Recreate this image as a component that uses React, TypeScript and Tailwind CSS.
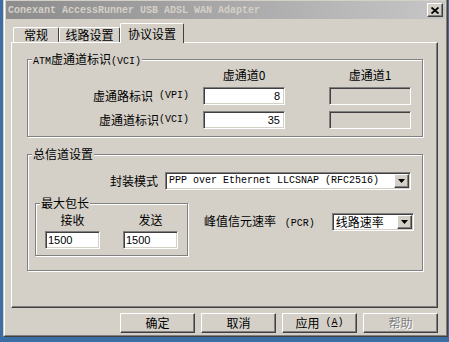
import type { ReactNode } from 'react'

const raised =
  'border border-t-white border-l-white border-r-[#404040] border-b-[#404040] shadow-[inset_-1px_-1px_0_#808080]'
const sunken =
  'border border-t-[#808080] border-l-[#808080] border-r-white border-b-white shadow-[inset_1px_1px_0_#404040,inset_-1px_-1px_0_#d4d0c8]'
const mono = "font-['Liberation_Mono',monospace] text-[10px]"
const sans = "font-['Liberation_Sans',sans-serif] text-[11px]"

function Latin({ children }: { children: ReactNode }) {
  return <span className={mono}>{children}</span>
}

function GroupBox({ label, className, children }: { label: ReactNode; className: string; children: ReactNode }) {
  return (
    <div className={`relative border border-[#808080] shadow-[1px_1px_0_#fff,inset_1px_1px_0_#fff] ${className}`}>
      <span className="absolute -top-[8px] left-[4px] bg-[#d4d0c8] px-[1px] leading-[14px] whitespace-nowrap">{label}</span>
      {children}
    </div>
  )
}

function TextBox({ value, className, disabled }: { value?: string; className: string; disabled?: boolean }) {
  return (
    <div
      className={`${sunken} h-[18px] flex items-center ${sans} ${disabled ? 'bg-[#d4d0c8]' : 'bg-white'} ${className}`}
    >
      {value}
    </div>
  )
}

function DropArrow() {
  return (
    <div className={`${raised} bg-[#d4d0c8] w-[15px] h-[14px] mr-[1px] flex items-center justify-center shrink-0`}>
      <svg width="7" height="4" viewBox="0 0 7 4">
        <path d="M0 0h7L3.5 4z" fill="#000" />
      </svg>
    </div>
  )
}

function Button({ children, disabled }: { children: ReactNode; disabled?: boolean }) {
  return (
    <div
      className={`${raised} bg-[#d4d0c8] w-[75px] h-[20px] flex items-center justify-center leading-none ${
        disabled ? 'text-[#808080] [text-shadow:1px_1px_0_#fff]' : 'text-black'
      }`}
    >
      {children}
    </div>
  )
}

export default function App() {
  return (
    <div className="w-[449px] h-[342px] overflow-hidden bg-[#3a6ea5] font-['Noto_Sans_CJK_SC',sans-serif] text-[12px] text-black">
      <div className="ml-[3px] -mt-[2px] w-[445px] h-[339px] bg-[#d4d0c8] border border-t-[#d4d0c8] border-l-[#d4d0c8] border-r-[#404040] border-b-[#404040]">
        <div className="h-full border border-t-white border-l-white border-r-[#808080] border-b-[#808080] p-px">
          {/* title bar, inactive */}
          <div className="h-[18px] flex items-center justify-between pl-[2px] pr-[2px] bg-gradient-to-r from-[#8c8c8c] to-[#c6c6c6]">
            <span className={`${mono} font-bold text-[#d4d0c8] whitespace-nowrap`}>
              Conexant AccessRunner USB ADSL WAN Adapter
            </span>
            <div className={`${raised} bg-[#d4d0c8] w-[16px] h-[14px] flex items-center justify-center`}>
              <svg width="8" height="7" viewBox="0 0 8 7">
                <path d="M0.5 0.5L7.5 6.5M7.5 0.5L0.5 6.5" stroke="#000" strokeWidth="1.8" />
              </svg>
            </div>
          </div>

          {/* tabs */}
          <div className="mt-[3px] h-[20px] flex items-end pl-[7px]">
            <div className={`border-t border-l border-r border-t-white border-l-white border-r-[#404040] rounded-t-[2px] w-[46px] h-[15px] flex items-center justify-center leading-none`}>
              常规
            </div>
            <div className={`border-t border-l border-r border-t-white border-l-white border-r-[#404040] rounded-t-[2px] w-[61px] h-[15px] flex items-center justify-center leading-none`}>
              线路设置
            </div>
            <div className="relative z-10 -mb-px border-t border-l border-r border-t-white border-l-white border-r-[#404040] rounded-t-[2px] bg-[#d4d0c8] w-[64px] h-[20px] flex items-center justify-center leading-none">
              协议设置
            </div>
          </div>

          {/* tab panel */}
          <div className={`${raised} ml-[5px] w-[427px] h-[266px] bg-[#d4d0c8] flex flex-col`}>
            <GroupBox
              className="ml-[15px] mt-[16px] w-[396px] h-[78px]"
              label={
                <>
                  <Latin>ATM</Latin>虚通道标识<Latin>(VCI)</Latin>
                </>
              }
            >
              <div className="grid grid-cols-[161px_96px_126px] grid-rows-[12px_18px_18px] gap-y-[6px] pt-[9px] leading-none">
                <div />
                <div className="ml-[14px] w-[82px] text-center">虚通道0</div>
                <div className="ml-[44px] w-[82px] text-center">虚通道1</div>

                <div className="flex items-center justify-end whitespace-nowrap">
                  虚通路标识 <Latin>&nbsp;(VPI)</Latin>
                </div>
                <TextBox className="ml-[14px] w-[82px] justify-end pr-[4px]" value="8" />
                <TextBox className="ml-[44px] w-[82px]" disabled />

                <div className="flex items-center justify-end whitespace-nowrap">
                  虚通道标识<Latin>(VCI)</Latin>
                </div>
                <TextBox className="ml-[14px] w-[82px] justify-end pr-[4px]" value="35" />
                <TextBox className="ml-[44px] w-[82px]" disabled />
              </div>
            </GroupBox>

            <GroupBox className="ml-[15px] mt-[17px] w-[396px] h-[117px]" label="总信道设置">
              <div className="mt-[17px] pr-[11px] flex items-center justify-end gap-[7px] leading-none">
                <span>封装模式</span>
                <div className={`${sunken} w-[246px] h-[18px] bg-white flex items-center pl-[3px]`}>
                  <span className={`flex-1 ${mono} whitespace-nowrap`}>PPP over Ethernet LLCSNAP (RFC2516)</span>
                  <DropArrow />
                </div>
              </div>

              <div className="mt-[13px] flex items-start leading-none">
                <GroupBox className="ml-[7px] w-[153px] h-[53px]" label="最大包长">
                  <div className="pt-[10px] pl-[9px] grid grid-cols-[55px_55px] gap-x-[23px] grid-rows-[12px_18px] gap-y-[5px]">
                    <div className="text-center">接收</div>
                    <div className="text-center">发送</div>
                    <TextBox className="w-[55px] pl-[2px]" value="1500" />
                    <TextBox className="w-[55px] pl-[2px]" value="1500" />
                  </div>
                </GroupBox>
                <div className="ml-[16px] mt-[10px] flex items-center gap-[17px]">
                  <span className="whitespace-nowrap">
                    峰值信元速率 <Latin>&nbsp;(PCR)</Latin>
                  </span>
                  <div className={`${sunken} w-[82px] h-[18px] bg-white flex items-center pl-[3px]`}>
                    <span className="flex-1 whitespace-nowrap">线路速率</span>
                    <DropArrow />
                  </div>
                </div>
              </div>
            </GroupBox>
          </div>

          {/* dialog buttons */}
          <div className="ml-[5px] w-[427px] mt-[5px] flex justify-end gap-[6px]">
            <Button>确定</Button>
            <Button>取消</Button>
            <Button>
              应用<Latin>&nbsp;(<span className="underline">A</span>)</Latin>
            </Button>
            <Button disabled>帮助</Button>
          </div>
        </div>
      </div>
    </div>
  )
}
